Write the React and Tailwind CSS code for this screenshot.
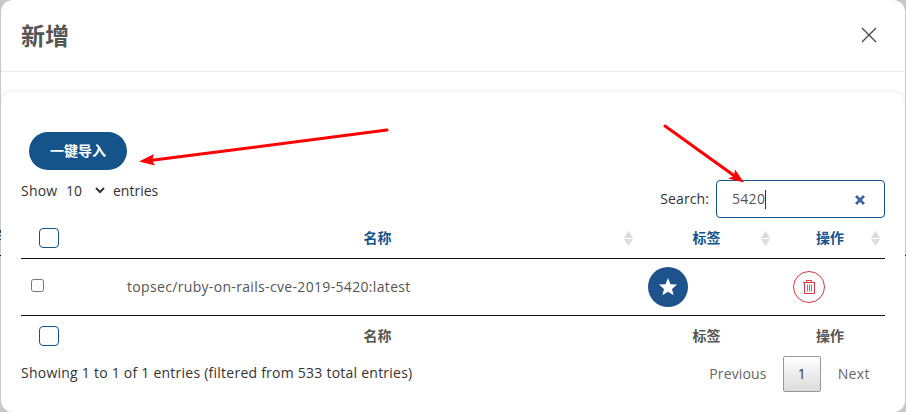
import React from "react";

const FONT = "font-['Open_Sans','Noto_Sans_CJK_SC',sans-serif]";

function Sort() {
  return (
    <svg width="9" height="15" viewBox="0 0 9 15" className="mr-[5px] shrink-0" fill="#dcdcdc">
      <path d="M4.500 0 9 7H0ZM4.500 15 9 8H0Z" />
    </svg>
  );
}

function HeadCell({ children, sortable }) {
  return (
    <div className="relative flex items-center justify-center">
      <span>{children}</span>
      {sortable && (
        <span className="absolute right-0">
          <Sort />
        </span>
      )}
    </div>
  );
}

function Box() {
  return <span className="ml-[18px] block size-5 rounded-[4px] border border-[#15548b] bg-white" />;
}

function LabelRow({ sortable, className }) {
  return (
    <div className={"grid grid-cols-[96px_521px_137px_110px] items-center text-[14px] leading-5 font-bold " + className}>
      <Box />
      <HeadCell sortable={sortable}>名称</HeadCell>
      <HeadCell sortable={sortable}>标签</HeadCell>
      <HeadCell sortable={sortable}>操作</HeadCell>
    </div>
  );
}

export default function App() {
  return (
    <div className={"relative flex h-[412px] w-[906px] flex-col overflow-hidden bg-[#c8c8c8] px-px text-[14px] text-[#333] " + FONT}>
      <span className="absolute top-[230px] left-0 h-[3px] w-px bg-[#15416b]" />
      <span className="absolute top-[235px] left-0 h-px w-px bg-[#15416b]" />
      <span className="absolute top-[239px] left-0 h-px w-px bg-[#15416b]" />
      <span className="absolute top-[255px] left-0 h-px w-[906px] bg-[#111]" />
      <div className="relative flex h-[412px] flex-col overflow-hidden rounded-[12px] bg-white">
        <header className="flex h-[72px] shrink-0 items-center justify-between border-b border-[#ebebeb] pr-[28px] pl-5">
          <h1 className="text-[24px] leading-8 font-bold text-[#555]">新增</h1>
          <svg width="16" height="16" viewBox="0 0 16 16" fill="none" stroke="#444" strokeWidth="1.3" className="mt-[-1px]">
            <path d="M1 1 15 15M15 1 1 15" />
          </svg>
        </header>

        <main className="mt-5 flex flex-1 flex-col rounded-t-[12px] bg-white px-5 pt-10 shadow-[0_0_4px_rgba(0,0,0,0.13)]">
          <button className="ml-2 h-[38px] w-[98px] rounded-full bg-[#15548b] text-[14px] leading-5 font-bold text-white">
            一键导入
          </button>

          <div className="flex h-12 justify-between">
            <div className="mt-[11px] flex h-5 items-center leading-5">
              <span className="w-[45px] tracking-[0.2px]">Show</span>
              <span className="w-[29px]">10</span>
              <svg width="10" height="7" viewBox="0 0 10 7" fill="none" stroke="#333" strokeWidth="2" className="mt-[-2px]">
                <path d="M1 1 5 5 9 1" />
              </svg>
              <span className="ml-[8px]">entries</span>
            </div>
            <div className="mt-[10px] flex h-[38px] items-center">
              <span className="mt-[-2px] mr-[7px] tracking-[0.1px]">Search:</span>
              <div className="flex h-[38px] w-[169px] items-center rounded-[4px] border border-[#15548b] pr-[19px] pl-[15px] text-[#555]">
                <span className="mt-[-2px] tracking-[0.3px]">5420</span>
                <span className="h-[19px] w-px bg-[#333]" />
                <svg width="10" height="10" viewBox="0 0 10 10" fill="none" stroke="#4065a0" strokeWidth="2.7" className="mt-[2px] ml-auto">
                  <path d="M1 1 9 9M9 1 1 9" />
                </svg>
              </div>
            </div>
          </div>

          <LabelRow sortable className="h-10 text-[#15548b]" />

          <div className="grid h-[58px] grid-cols-[96px_521px_137px_110px] items-center border-y border-[#111] text-[#555]">
            <span className="mt-[-3px] ml-[10px] block size-[13px] rounded-[2.5px] border border-[#767676]" />
            <span className="mt-[-2px] pl-[10px] tracking-[0.33px] whitespace-nowrap">topsec/ruby-on-rails-cve-2019-5420:latest</span>
            <span className="ml-[10px] flex size-10 items-center justify-center rounded-full bg-[#1d528b]">
              <svg width="18" height="18" viewBox="0 0 18 18" fill="#fff">
                <path d="M9 0 11.5 6.2 18 6.6 13 10.9 14.6 17.2 9 13.8 3.4 17.2 5 10.900 0 6.6 6.5 6.2Z" />
              </svg>
            </span>
            <span className="ml-[18px] flex size-8 items-center justify-center rounded-full border border-[#dc3545]">
              <svg width="14" height="16" viewBox="0 0 14 16" fill="none" stroke="#dc3545" strokeWidth="1" className="mt-[-1px]">
                <path d="M1 3.5H13M4.5 3V1.5H9.5V3M2.5 3.5V14.5H12.5V3.5" />
                <path d="M5.5 5.5V12.5M7.5 5.5V12.5M9.5 5.5V12.5" strokeOpacity="0.8" />
              </svg>
            </span>
          </div>

          <LabelRow className="h-10 text-[#555]" />

          <footer className="flex h-9 items-center justify-between">
            <span className="mt-[-4px] tracking-[0.24px] whitespace-nowrap">Showing 1 to 1 of 1 entries (filtered from 533 total entries)</span>
            <div className="flex items-center text-[#666]">
              <span className="mt-[-2px] mr-[16px] tracking-[0.15px]">Previous</span>
              <span className="flex h-9 w-[38px] items-center justify-center rounded-[2px] border border-[#979797] bg-linear-to-b from-white to-[#dcdcdc] pb-[2px] text-[#333]">
                1
              </span>
              <span className="mt-[-2px] mr-[15px] ml-[17px] tracking-[0.4px]">Next</span>
            </div>
          </footer>
        </main>
      </div>

      <svg width="906" height="412" viewBox="0 0 906 412" className="pointer-events-none absolute inset-0" fill="#f00" stroke="#f00">
        <path d="M387 130 152 160.300M665 126 736 177" strokeWidth="3" strokeLinecap="round" fill="none" />
        <path d="M139 161.500 154 154 152 160.500 155 165.500ZM744 182.500 735 169.500 734 176 728 178.500Z" stroke="none" />
      </svg>
    </div>
  );
}
